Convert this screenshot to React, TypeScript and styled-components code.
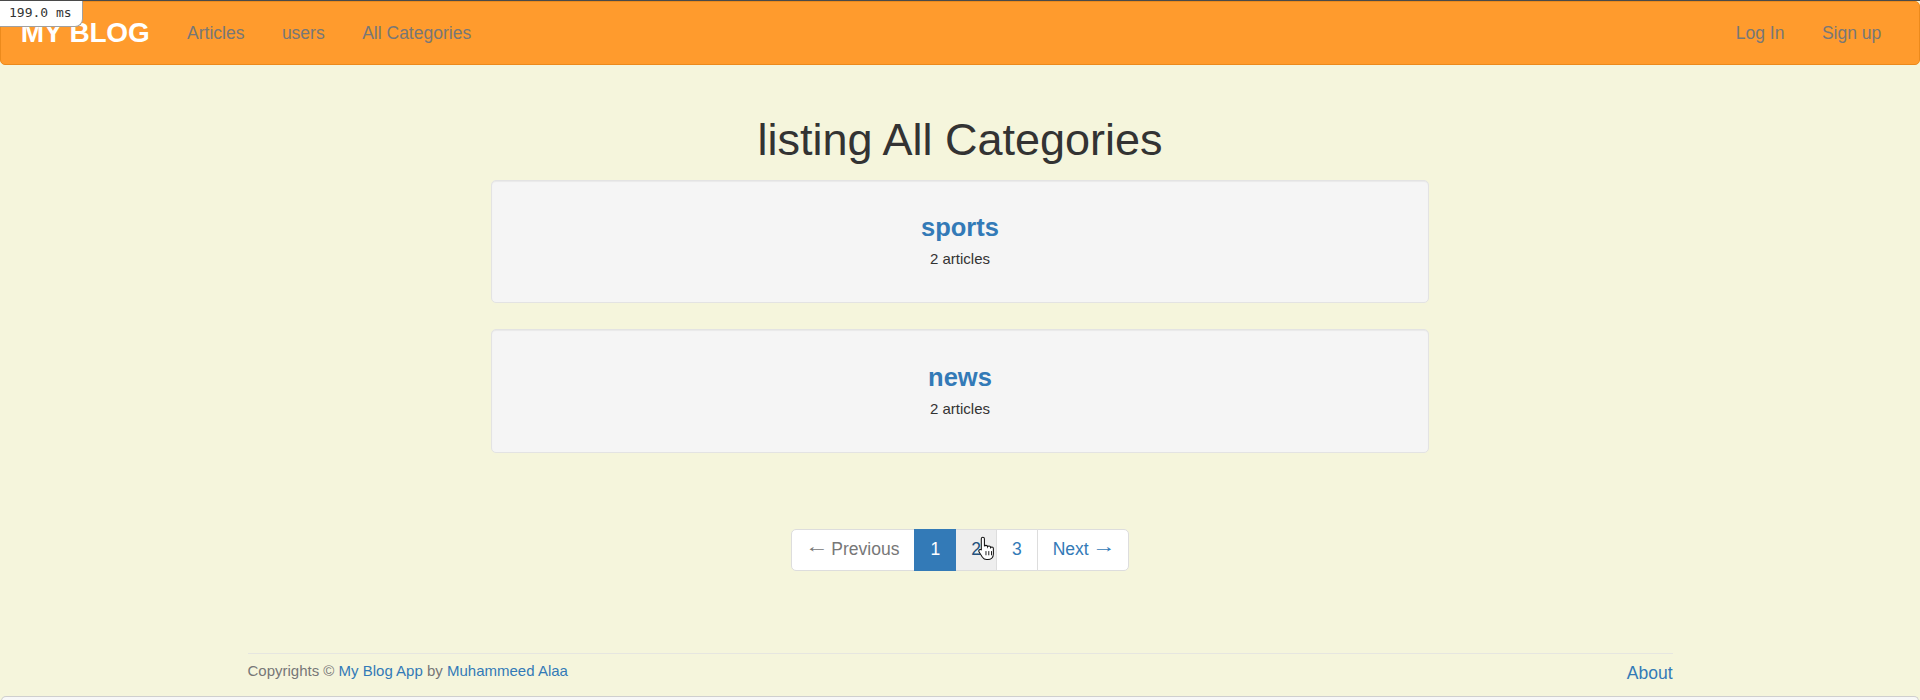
import React from 'react';
import styled, { createGlobalStyle } from 'styled-components';

const GlobalStyle = createGlobalStyle`
    html, body {
        margin: 0;
        padding: 0;
    }
    body {
        background-color: #f5f5dc;
        font-family: "Liberation Sans", Arial, Helvetica, sans-serif;
        font-size: 17.5px;
        line-height: 1.42857;
        color: #333;
        overflow: hidden;
    }
    a {
        text-decoration: none;
    }
`;

const Page = styled.div`
    position: relative;
    border-top: 1px solid #4a4a4a;
    height: 699px;
    overflow: hidden;
`;

const TimingBadge = styled.div`
    position: absolute;
    top: 0;
    left: 0;
    width: 73px;
    height: 25px;
    padding-left: 9px;
    background: #fff;
    border: 1px solid #a0a0a0;
    border-top: none;
    border-left: none;
    border-bottom-right-radius: 8px;
    font-family: "DejaVu Sans Mono", "Liberation Mono", monospace;
    font-size: 13px;
    line-height: 24px;
    color: #333;
    z-index: 5;
`;

const Navbar = styled.nav`
    height: 62px;
    display: flex;
    align-items: center;
    background-color: #ff9b2d;
    border: 1px solid #ec8a1c;
    border-radius: 5px;
    margin-bottom: 25px;
    padding: 0 19px 0 1px;
`;

const Brand = styled.a`
    padding: 0 18.75px;
    font-size: 28px;
    font-weight: 700;
    color: #fff;
    letter-spacing: -0.2px;
    line-height: 62px;
`;

const NavList = styled.div<{ $right?: boolean }>`
    display: flex;
    align-items: center;
    margin-left: ${(p) => (p.$right ? 'auto' : '0')};
`;

const NavLink = styled.a`
    padding: 0 18.75px;
    font-size: 17.5px;
    color: #777;
    line-height: 62px;
`;

const Main = styled.main`
    display: flow-root;
    width: 938px;
    margin: 0 auto;
`;

const Title = styled.h1`
    margin: 25px 0 15px;
    font-size: 45px;
    font-weight: 500;
    line-height: 1.1;
    text-align: center;
    color: #333;
`;

const Well = styled.div`
    height: 74px;
    padding: 23.75px;
    margin-bottom: 26px;
    background-color: #f5f5f5;
    border: 1px solid #e3e3e3;
    border-radius: 5px;
    box-shadow: inset 0 1px 1px rgba(0, 0, 0, 0.05);
    text-align: center;
`;

const CategoryName = styled.a`
    display: block;
    margin: 8px 0 4px;
    font-size: 25.5px;
    font-weight: 700;
    line-height: 30px;
    color: #337ab7;
`;

const Count = styled.p`
    margin: 0;
    font-size: 15px;
    line-height: 25px;
    color: #333;
`;

const Pager = styled.ul`
    display: flex;
    justify-content: center;
    list-style: none;
    margin: 76px 0 0;
    padding: 0;
`;

const PageItem = styled.li<{ $active?: boolean; $hover?: boolean; $disabled?: boolean }>`
    position: relative;
    margin-left: -1px;
    padding: 7.5px 15px;
    font-size: 17.5px;
    line-height: 25px;
    border: 1px solid ${(p) => (p.$active ? '#337ab7' : '#ddd')};
    background-color: ${(p) => (p.$active ? '#337ab7' : p.$hover ? '#eee' : '#fff')};
    color: ${(p) => (p.$active ? '#fff' : p.$disabled ? '#777' : p.$hover ? '#23527c' : '#337ab7')};
    z-index: ${(p) => (p.$active ? 2 : 1)};
    &:first-child {
        margin-left: 0;
        border-radius: 5px 0 0 5px;
    }
    &:last-child {
        border-radius: 0 5px 5px 0;
    }
`;

const Arrow = styled.span`
    display: inline-block;
    margin: 0 1px;
    transform: translateY(-3px) scaleX(1.35);
`;

const Cursor = styled.svg`
    position: absolute;
    left: 22px;
    top: 6px;
    z-index: 4;
`;

const Footer = styled.footer`
    width: 1425px;
    margin: 82px auto 0;
    padding-top: 6px;
    border-top: 1px solid #e6e6e0;
    display: flex;
    justify-content: space-between;
    align-items: flex-start;
`;

const Copy = styled.p`
    margin: 0;
    font-size: 15px;
    line-height: 21px;
    color: #777;
    a {
        color: #337ab7;
    }
`;

const FooterLink = styled.a`
    font-size: 17.5px;
    line-height: 25px;
    margin-top: 1px;
    color: #337ab7;
`;

const BottomBar = styled.div`
    height: 4px;
    margin: 10px 1px 0;
    background: #f8f8f8;
    border: 1px solid #cfcfcf;
    border-bottom: none;
    border-radius: 5px 5px 0 0;
`;

const categories = [
    { name: 'sports', count: 2 },
    { name: 'news', count: 2 },
];

const HandCursor = () => (
    <Cursor width="17" height="25" viewBox="0 0 16 24">
        <path
            d="M4.5 1.2c.9 0 1.5.6 1.5 1.5v7.2c.3-.6.9-.9 1.5-.9.9 0 1.5.6 1.5 1.4.3-.5.8-.8 1.4-.8.9 0 1.5.6 1.5 1.5.3-.4.8-.6 1.3-.6.9 0 1.4.6 1.4 1.5v5.2c0 3.3-2.3 5.4-5.4 5.4H8.1c-1.8 0-3-.8-4-2.2L.9 15.3c-.5-.7-.4-1.6.3-2.1.7-.5 1.6-.3 2.1.4l-.3-.4V2.7c0-.9.6-1.5 1.5-1.5z"
            fill="#fff"
            stroke="#111"
            strokeWidth="1"
        />
        <path d="M7.5 14.5v4M10.2 14.5v4M12.8 14.5v4" stroke="#111" strokeWidth="0.9" />
    </Cursor>
);

const App = () => {
    return (
        <>
            <GlobalStyle />
            <Page>
                <TimingBadge>199.0 ms</TimingBadge>
                <Navbar>
                    <Brand href="#">MY BLOG</Brand>
                    <NavList>
                        <NavLink href="#">Articles</NavLink>
                        <NavLink href="#">users</NavLink>
                        <NavLink href="#">All Categories</NavLink>
                    </NavList>
                    <NavList $right>
                        <NavLink href="#">Log In</NavLink>
                        <NavLink href="#">Sign up</NavLink>
                    </NavList>
                </Navbar>
                <Main>
                    <Title>listing All Categories</Title>
                    {categories.map((c) => (
                        <Well key={c.name}>
                            <CategoryName href="#">{c.name}</CategoryName>
                            <Count>{c.count} articles</Count>
                        </Well>
                    ))}
                    <Pager>
                        <PageItem $disabled><Arrow>←</Arrow> Previous</PageItem>
                        <PageItem $active>1</PageItem>
                        <PageItem $hover>
                            2
                            <HandCursor />
                        </PageItem>
                        <PageItem>3</PageItem>
                        <PageItem>Next <Arrow>→</Arrow></PageItem>
                    </Pager>
                </Main>
                <Footer>
                    <Copy>
                        Copyrights © <a href="#">My Blog App</a> by <a href="#">Muhammeed Alaa</a>
                    </Copy>
                    <FooterLink href="#">About</FooterLink>
                </Footer>
                <BottomBar />
            </Page>
        </>
    );
};

export default App;
